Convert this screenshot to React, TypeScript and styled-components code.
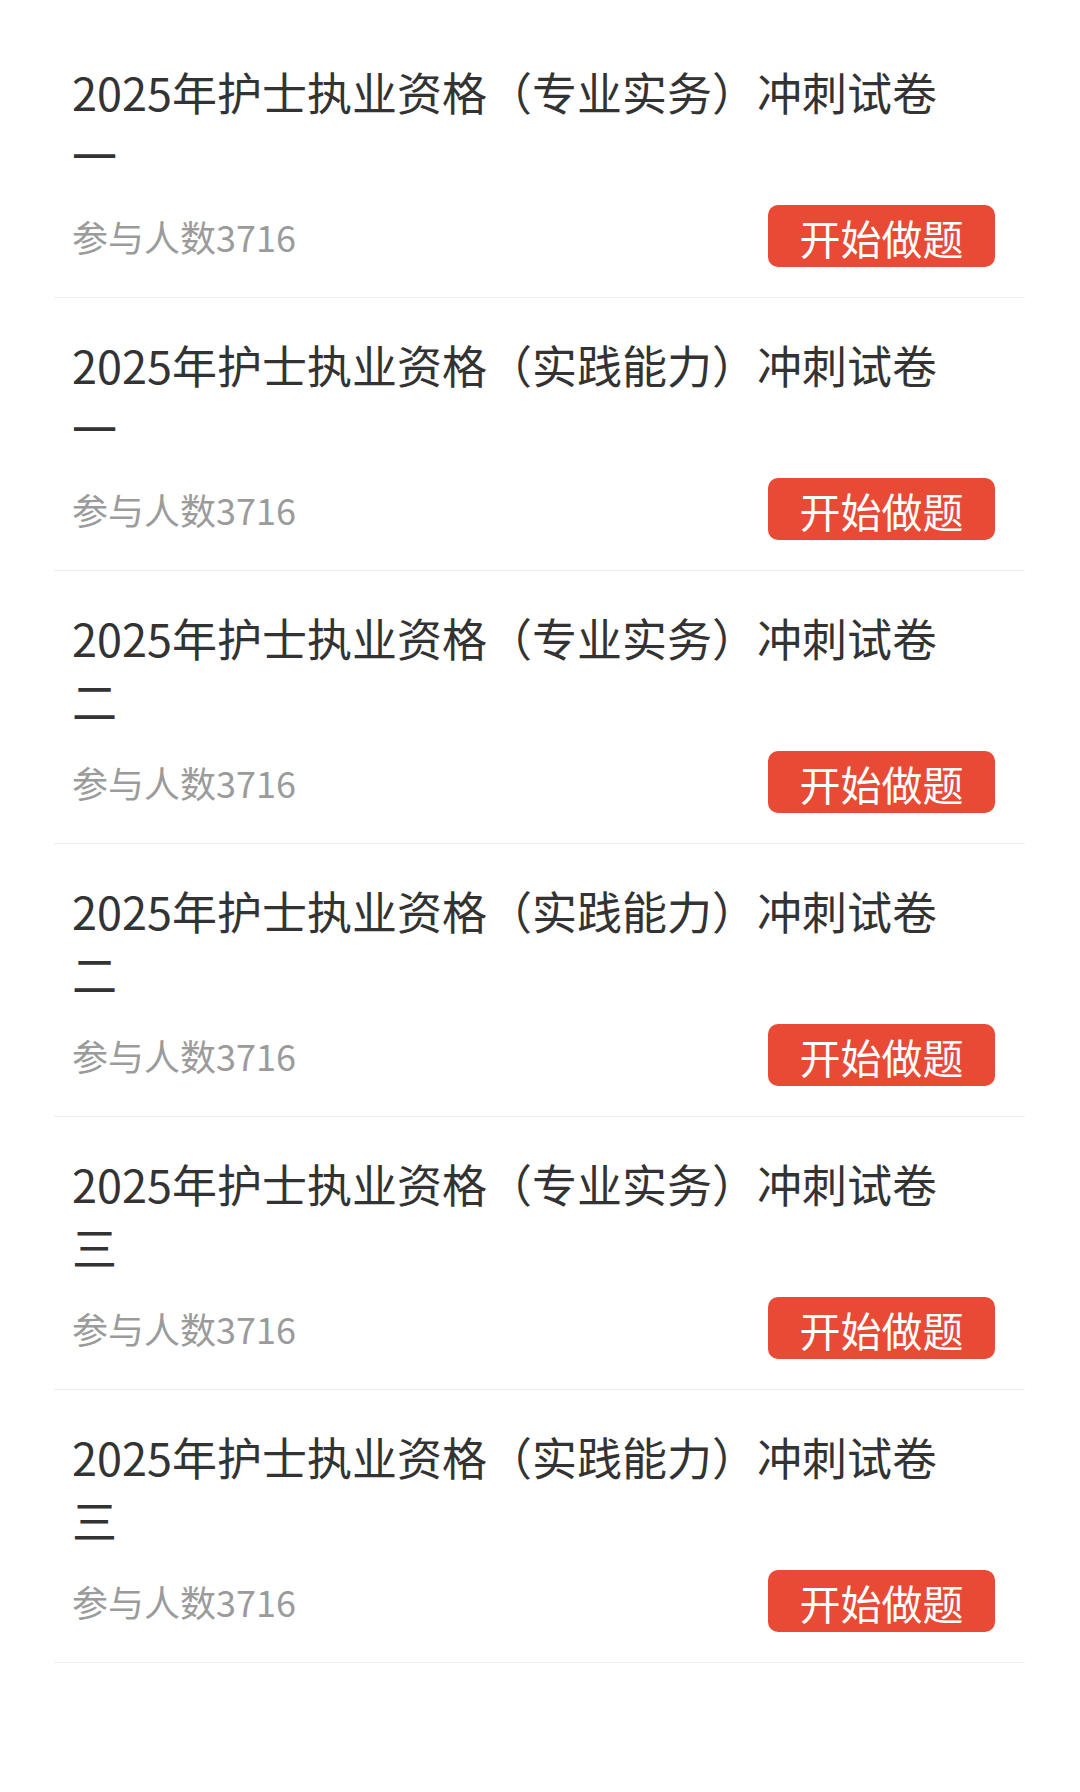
import styled, { createGlobalStyle } from "styled-components";

const GlobalStyle = createGlobalStyle`
  html, body {
    margin: 0;
    padding: 0;
    background: #ffffff;
  }
  body {
    font-family: "Noto Sans CJK SC", "Noto Sans", sans-serif;
  }
`;

type Paper = {
  id: number;
  title: string;
  count: number;
};

const papers: Paper[] = [
  { id: 1, title: "2025年护士执业资格（专业实务）冲刺试卷一", count: 3716 },
  { id: 2, title: "2025年护士执业资格（实践能力）冲刺试卷一", count: 3716 },
  { id: 3, title: "2025年护士执业资格（专业实务）冲刺试卷二", count: 3716 },
  { id: 4, title: "2025年护士执业资格（实践能力）冲刺试卷二", count: 3716 },
  { id: 5, title: "2025年护士执业资格（专业实务）冲刺试卷三", count: 3716 },
  { id: 6, title: "2025年护士执业资格（实践能力）冲刺试卷三", count: 3716 },
];

export default function App() {
  return (
    <>
      <GlobalStyle />
      <Page>
        <List>
          {papers.map((p) => (
            <Item key={p.id}>
              <Title>{p.title}</Title>
              <Footer>
                <Count>参与人数{p.count}</Count>
                <StartButton type="button">开始做题</StartButton>
              </Footer>
            </Item>
          ))}
        </List>
      </Page>
    </>
  );
}

const Page = styled.div`
  width: 1080px;
  min-height: 1792px;
  background: #ffffff;
`;

const List = styled.div`
  padding: 25px 55px 0 54px;
  display: flex;
  flex-direction: column;
`;

const Item = styled.div`
  padding: 35px 30px 30px 18px;
  border-bottom: 1px solid #eeeeee;
  display: flex;
  flex-direction: column;
  gap: 19px;
`;

const Title = styled.div`
  padding-right: 40px;
  font-size: 45px;
  line-height: 63px;
  color: #333333;
  word-break: break-all;
`;

const Footer = styled.div`
  display: flex;
  align-items: center;
  justify-content: space-between;
  height: 62px;
`;

const Count = styled.span`
  font-size: 36px;
  color: #9b9b9b;
`;

const StartButton = styled.button`
  width: 227px;
  height: 62px;
  border: none;
  border-radius: 10px;
  background: #e84a36;
  color: #ffffff;
  font-family: inherit;
  font-size: 41px;
  line-height: 1;
  padding: 3px 0 0;
  display: flex;
  align-items: center;
  justify-content: center;
`;
